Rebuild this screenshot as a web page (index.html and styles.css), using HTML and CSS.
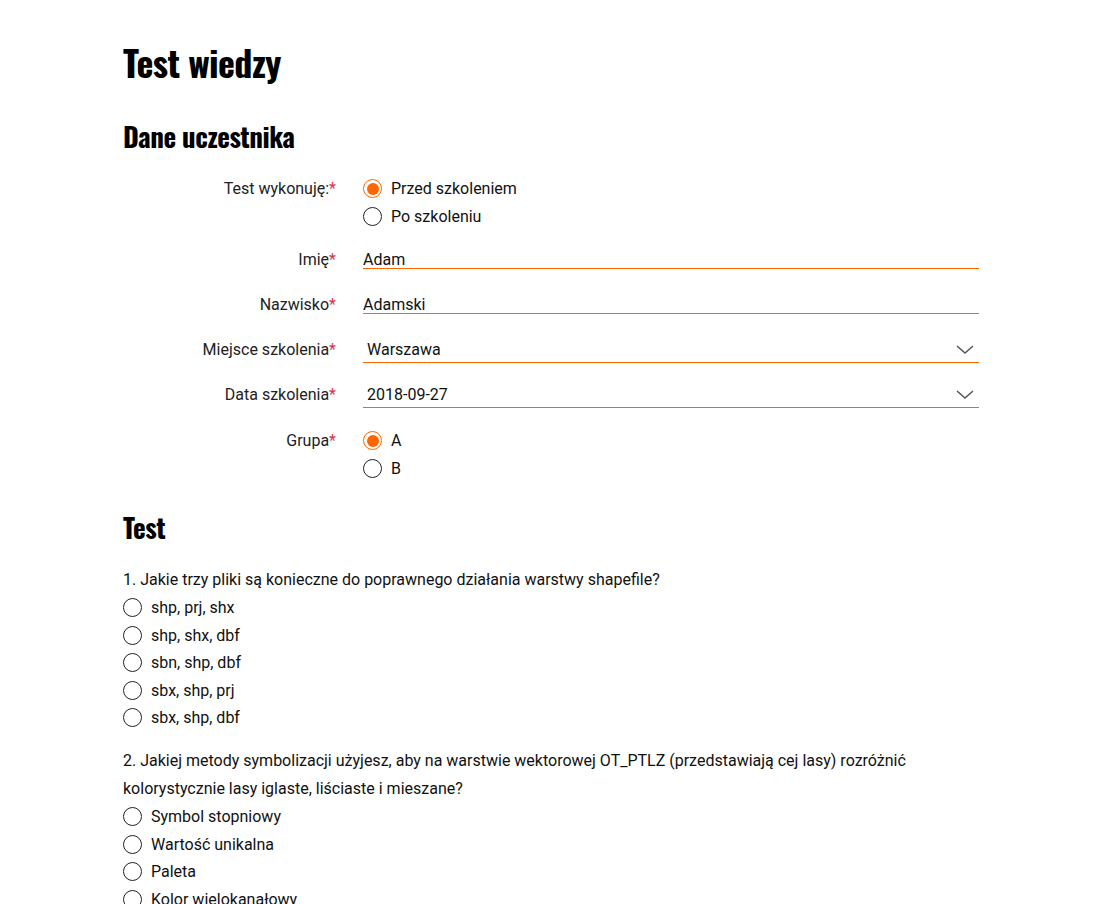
FILE: index.html
```html
<!DOCTYPE html>
<html lang="pl">
<head>
<meta charset="utf-8">
<title>Test wiedzy</title>
<link rel="stylesheet" href="styles.css">
</head>
<body>
<main class="page">
  <h1 class="title">Test wiedzy</h1>

  <h2 class="section">Dane uczestnika</h2>
  <form class="form">
    <div class="row row-radio">
      <div class="label">Test wykonuję:<span class="req">*</span></div>
      <div class="field">
        <label class="radio"><span class="dot on"></span>Przed szkoleniem</label>
        <label class="radio"><span class="dot"></span>Po szkoleniu</label>
      </div>
    </div>
    <div class="row row-input">
      <div class="label">Imię<span class="req">*</span></div>
      <div class="field"><div class="input">Adam</div></div>
    </div>
    <div class="row row-input">
      <div class="label">Nazwisko<span class="req">*</span></div>
      <div class="field"><div class="input">Adamski</div></div>
    </div>
    <div class="row row-select">
      <div class="label">Miejsce szkolenia<span class="req">*</span></div>
      <div class="field"><div class="select"><span>Warszawa</span><svg class="chev" width="18" height="10" viewBox="0 0 18 10"><path d="M1 1l8 7 8-7" fill="none" stroke="#555" stroke-width="1.5"/></svg></div></div>
    </div>
    <div class="row row-select">
      <div class="label">Data szkolenia<span class="req">*</span></div>
      <div class="field"><div class="select"><span>2018-09-27</span><svg class="chev" width="18" height="10" viewBox="0 0 18 10"><path d="M1 1l8 7 8-7" fill="none" stroke="#555" stroke-width="1.5"/></svg></div></div>
    </div>
    <div class="row row-radio">
      <div class="label">Grupa<span class="req">*</span></div>
      <div class="field">
        <label class="radio"><span class="dot on"></span>A</label>
        <label class="radio"><span class="dot"></span>B</label>
      </div>
    </div>
  </form>

  <h2 class="section section-test">Test</h2>
  <div class="question">
    <p class="q">1. Jakie trzy pliki są konieczne do poprawnego działania warstwy shapefile?</p>
    <label class="radio"><span class="dot"></span>shp, prj, shx</label>
    <label class="radio"><span class="dot"></span>shp, shx, dbf</label>
    <label class="radio"><span class="dot"></span>sbn, shp, dbf</label>
    <label class="radio"><span class="dot"></span>sbx, shp, prj</label>
    <label class="radio"><span class="dot"></span>sbx, shp, dbf</label>
  </div>
  <div class="question">
    <p class="q">2. Jakiej metody symbolizacji użyjesz, aby na warstwie wektorowej OT_PTLZ (przedstawiają cej lasy) rozróżnić kolorystycznie lasy iglaste, liściaste i mieszane?</p>
    <label class="radio"><span class="dot"></span>Symbol stopniowy</label>
    <label class="radio"><span class="dot"></span>Wartość unikalna</label>
    <label class="radio"><span class="dot"></span>Paleta</label>
    <label class="radio"><span class="dot"></span>Kolor wielokanałowy</label>
  </div>
</main>
</body>
</html>
```

FILE: styles.css
```css
* { box-sizing: border-box; }
html, body { margin: 0; padding: 0; background: #fff; }
body {
  font-family: Roboto, "Liberation Sans", sans-serif;
  font-size: 16px;
  color: #111;
}
.page {
  width: 860px;
  margin-left: 123px;
  padding-top: 40px;
}
.title, .section {
  font-family: "Oswald", "DejaVu Sans Condensed", "Liberation Sans Narrow", sans-serif;
  font-weight: 700;
  margin: 0;
  color: #000;
}
.title {
  font-size: 36px;
  line-height: 44px;
  letter-spacing: -0.6px;
}
.section {
  font-size: 27px;
  line-height: 34px;
  margin-top: 35px;
  letter-spacing: -0.5px;
}
.section-test { margin-top: 28px; }
.form {
  margin-top: 22px;
  display: flex;
  flex-direction: column;
  width: 856px;
}
.row {
  display: flex;
  align-items: flex-start;
}
.row-radio + .row-input { margin-top: 19px; }
.row-input + .row-input { margin-top: 23px; }
.row-input + .row-select { margin-top: 22px; }
.row-select + .row-select { margin-top: 20px; }
.row-select + .row-radio { margin-top: 19px; }
.label {
  width: 213px;
  text-align: right;
  line-height: 27.5px;
  color: #222;
  flex: none;
}
.row-input .label { line-height: 22px; }
.row-select .label { line-height: 24px; }
.req { color: #e0304a; }
.field {
  flex: 1;
  margin-left: 27px;
}
.row-radio .field { display: flex; flex-direction: column; }
.radio {
  display: flex;
  align-items: center;
  height: 27.5px;
  line-height: 27.5px;
  color: #111;
}
.dot {
  width: 19px;
  height: 19px;
  border: 1.5px solid #222;
  border-radius: 50%;
  margin-right: 9px;
  flex: none;
  position: relative;
}
.dot.on {
  border-color: #ff6600;
}
.dot.on::after {
  content: "";
  position: absolute;
  left: 2.5px; top: 2.5px; right: 2.5px; bottom: 2.5px;
  border-radius: 50%;
  background: #ff6600;
}
.input {
  border-bottom: 1px solid #ff6600;
  height: 20px;
  line-height: 22px;
  color: #111;
}
.select {
  display: flex;
  justify-content: space-between;
  align-items: center;
  border-bottom: 1px solid #ff6600;
  height: 25px;
  line-height: 24px;
  padding-left: 4px;
  padding-right: 5px;
  color: #111;
}
.question { margin-top: 22px; }
.question + .question { margin-top: 15.5px; }
.q {
  margin: 0;
  line-height: 28px;
}
```
